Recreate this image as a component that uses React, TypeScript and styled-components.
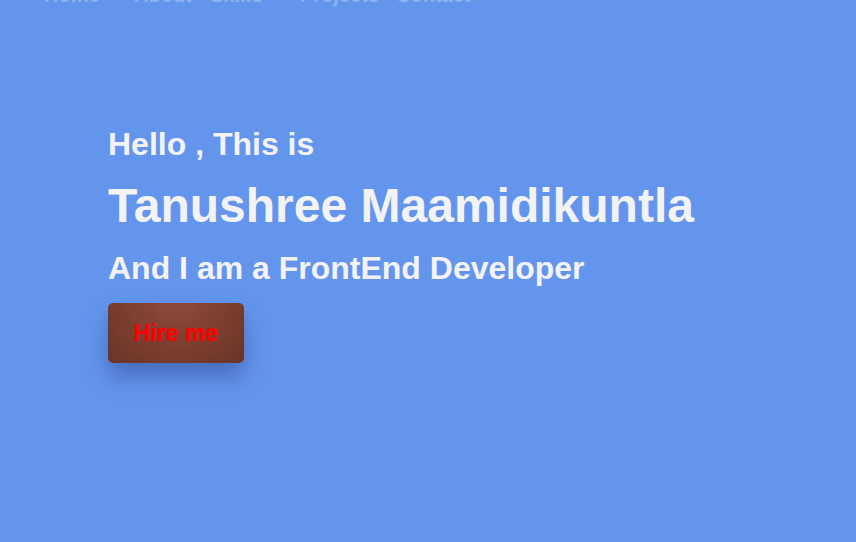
import React from "react";
import styled, { createGlobalStyle } from "styled-components";

const Global = createGlobalStyle`
  html, body { margin: 0; padding: 0; }
  body {
    background: #6495ed;
    font-family: "Liberation Sans", Arial, sans-serif;
    overflow: hidden;
  }
`;

const Page = styled.div`
  width: 856px;
  height: 542px;
  background: #6495ed;
  overflow: hidden;
  display: flex;
  flex-direction: column;
`;

const Nav = styled.nav`
  display: flex;
  padding-left: 44px;
  margin-top: -17px;
  height: 24px;
  line-height: 24px;
  color: rgba(255, 255, 255, 0.28);
  font-size: 20px;
  font-weight: bold;
`;

const NavItem = styled.span<{ $w: number }>`
  width: ${(p) => p.$w}px;
  white-space: nowrap;
`;

const Hero = styled.section`
  display: flex;
  flex-direction: column;
  align-items: flex-start;
  padding: 119px 0 0 108px;
  color: #f3f3f5;
`;

const Greeting = styled.h3`
  margin: 0;
  font-size: 32px;
  font-weight: bold;
  line-height: 36px;
`;

const Name = styled.h1`
  margin: 17px 0 0;
  font-size: 48px;
  font-weight: bold;
  line-height: 54px;
`;

const Role = styled.h2`
  margin: 17px 0 0;
  font-size: 32px;
  font-weight: bold;
  line-height: 36px;
`;

const HireButton = styled.button`
  margin-top: 17px;
  width: 136px;
  height: 60px;
  border: none;
  border-radius: 5px;
  background: radial-gradient(ellipse at 50% 0%, #8e4a3a 0%, #7a3e30 55%, #6a3426 100%);
  color: #ff0000;
  font-family: "Liberation Sans", Arial, sans-serif;
  font-size: 23px;
  font-weight: bold;
  text-shadow: 0 0 2px rgba(255, 0, 0, 0.5);
  box-shadow: 0 14px 22px rgba(40, 60, 130, 0.45);
  cursor: pointer;
`;

export default function App() {
  return (
    <Page>
      <Global />
      <Nav>
        <NavItem $w={90}>Home</NavItem>
        <NavItem $w={76}>About</NavItem>
        <NavItem $w={90}>Skills</NavItem>
        <NavItem $w={96}>Projects</NavItem>
        <NavItem $w={90}>Contact</NavItem>
      </Nav>
      <Hero>
        <Greeting>Hello , This is</Greeting>
        <Name>Tanushree Maamidikuntla</Name>
        <Role>And I am a FrontEnd Developer</Role>
        <HireButton>Hire me</HireButton>
      </Hero>
    </Page>
  );
}
